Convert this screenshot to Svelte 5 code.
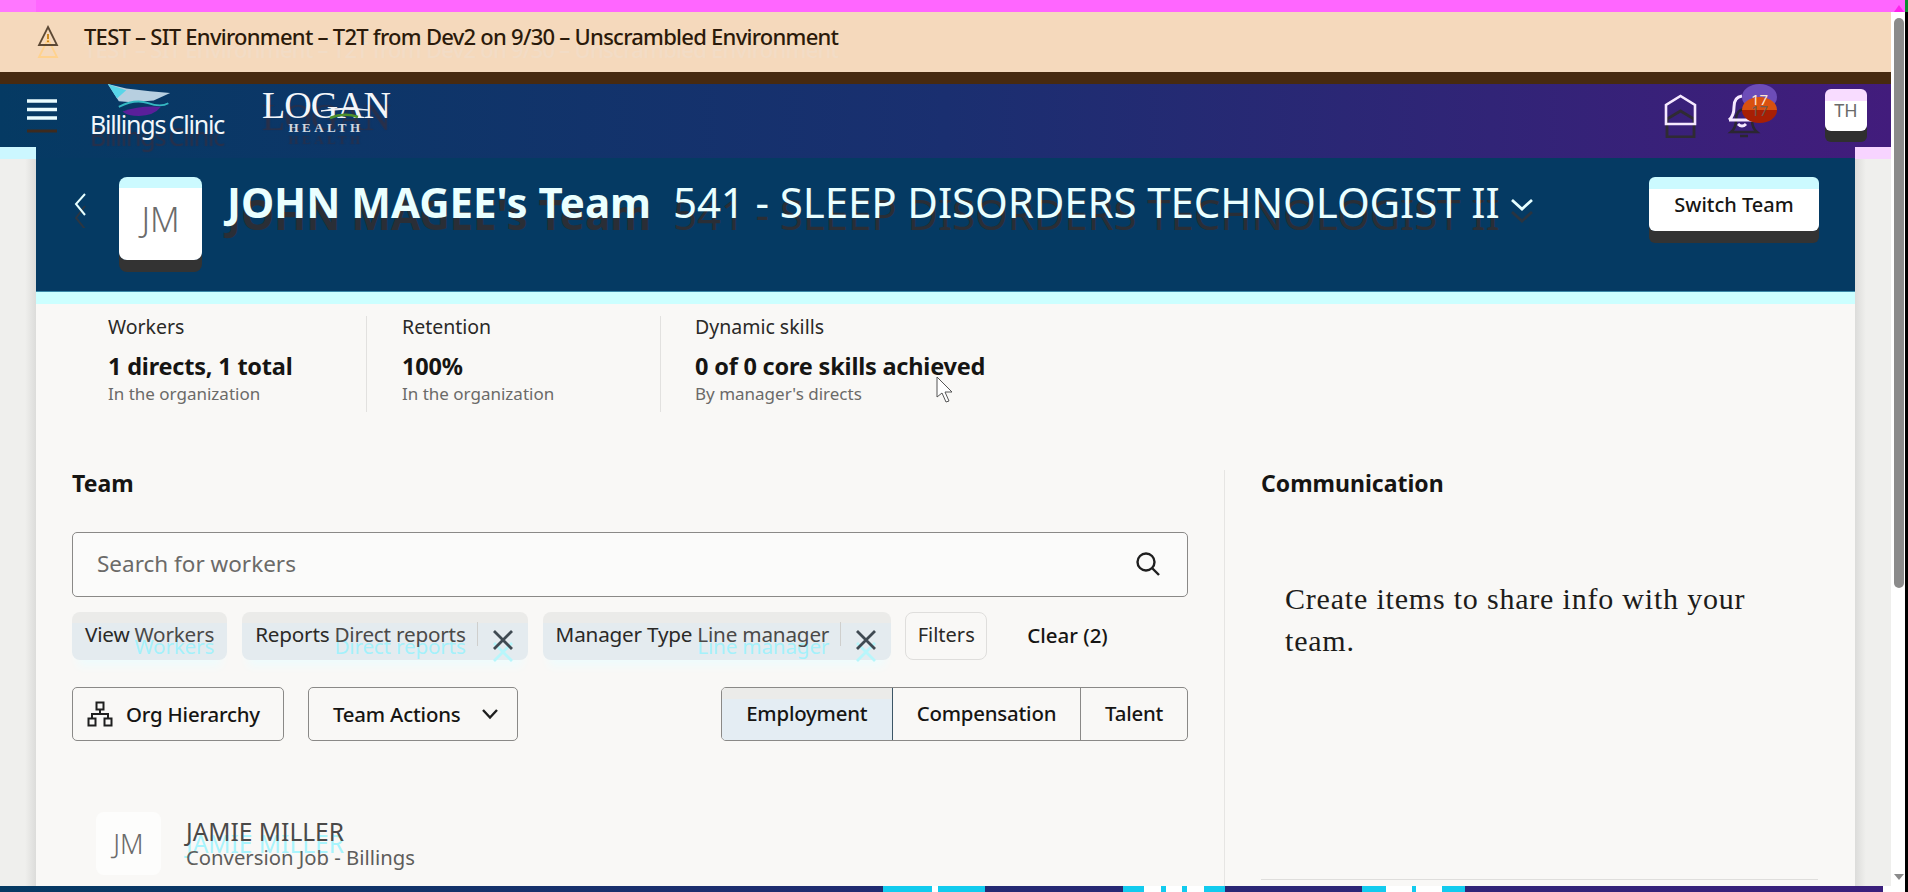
<script>
	const stats = [
		{ label: "Workers", value: "1 directs, 1 total", note: "In the organization" },
		{ label: "Retention", value: "100%", note: "In the organization" },
		{ label: "Dynamic skills", value: "0 of 0 core skills achieved", note: "By manager's directs" },
	];
	const chips = [
		{ name: "View", value: "Workers", close: false },
		{ name: "Reports", value: "Direct reports", close: true },
		{ name: "Manager Type", value: "Line manager", close: true },
	];
	const tabs = ["Employment", "Compensation", "Talent"];
	// cyan and white blocks in the bottom strip
	const glitches = [
		{ x: 883, w: 49, c: "#12cbee" },
		{ x: 932, w: 6, c: "#fff" },
		{ x: 938, w: 47, c: "#12cbee" },
		{ x: 1123, w: 21, c: "#12cbee" },
		{ x: 1144, w: 17, c: "#fff" },
		{ x: 1161, w: 5, c: "#12cbee" },
		{ x: 1166, w: 16, c: "#fff" },
		{ x: 1182, w: 5, c: "#12cbee" },
		{ x: 1187, w: 17, c: "#fff" },
		{ x: 1204, w: 21, c: "#12cbee" },
		{ x: 1362, w: 24, c: "#12cbee" },
		{ x: 1386, w: 26, c: "#fff" },
		{ x: 1412, w: 4, c: "#12cbee" },
		{ x: 1416, w: 26, c: "#fff" },
		{ x: 1442, w: 23, c: "#12cbee" },
		{ x: 1883, w: 8, c: "#fff" },
	];
</script>

<div class="page">
	<div class="main">
		<div class="magenta"></div>
		<div class="banner">
			<svg class="warn" width="22" height="36" viewBox="0 0 22 36">
				<path d="M11 14 L20 32 H2 Z" fill="none" stroke="#ffd28e" stroke-width="1.800" />
				<path d="M11 2 L20 20 H2 Z" fill="none" stroke="#5c4834" stroke-width="1.800" />
				<path d="M11 9v5M11 15.500v1.800" stroke="#c9800f" stroke-width="1.800" />
			</svg>
			<span>TEST – SIT Environment – T2T from Dev2 on 9/30 – Unscrambled Environment</span>
		</div>
		<div class="brown"></div>

		<header class="topbar">
			<svg class="burger" width="32" height="36" viewBox="0 0 32 36">
				<path d="M1 2h30M1 10.500h30M1 19h30" stroke="#e9fdff" stroke-width="3.600" />
				<path d="M1 32h30" stroke="#3d2a1e" stroke-width="3" />
			</svg>
			<div class="billings">
				<svg width="72" height="33" viewBox="0 0 72 36">
					<path d="M2 1 L22 6 L48 9 L70 11 L52 19 L28 21 L14 20 Z" fill="#b7cfe0" />
					<path d="M2 1 L12 17 L22 8 Z" fill="#58d5e8" />
					<path d="M14 26 Q32 17 46 22 T68 22" fill="none" stroke="#35b8c2" stroke-width="2" />
					<path d="M18 31 Q38 24 60 26 Q52 36 36 36 Q24 36 18 31Z" fill="#5a1f9a" />
				</svg>
				<span>Billings Clinic</span>
			</div>
			<div class="logan">
				<span class="logan-name">LOGAN</span>
				<svg class="logan-swoosh" width="50" height="16" viewBox="0 0 50 16">
					<path d="M1 6 Q24 1 48 5 Q24 3 1 6Z" fill="#f3f6fa" stroke="#f3f6fa" />
					<path d="M10 13 Q24 7 38 12" fill="none" stroke="#4d8f2a" stroke-width="2.500" />
				</svg>
				<span class="logan-sub">HEALTH</span>
			</div>
			<div class="spacer"></div>
			<svg class="home" width="33" height="44" viewBox="0 0 33 44">
				<path d="M3 43V25L16.500 17L30 25V43Z" fill="none" stroke="#2f2b33" stroke-width="2.800" />
				<path d="M2 30V11L16.500 2L31 11V30Z" fill="none" stroke="#f6e9ff" stroke-width="2.600" />
			</svg>
			<div class="bell-wrap">
				<svg width="34" height="46" viewBox="0 0 34 46">
					<path d="M4 38 Q9 34 9 26 Q9 16 17 15 Q25 16 25 26 Q25 34 30 38Z M13 42h8" fill="none" stroke="#2b2632" stroke-width="2.500" />
					<path d="M2 26 Q7 22 7 13 Q7 3 15 2 M2 26H28 M11 30 q4 4 8 0" fill="none" stroke="#f6e9ff" stroke-width="3" />
				</svg>
				<i class="bubble purple"></i>
				<i class="bubble red"></i>
				<span class="count">17</span>
			</div>
			<div class="tile-th">TH</div>
		</header>

		<div class="workspace">
			<div class="gutter left"></div>
			<div class="panel">
				<div class="strip"></div>
				<div class="team-band">
					<svg class="back" width="14" height="36" viewBox="0 0 14 36">
						<path d="M12 14 L3 26 L12 37" fill="none" stroke="#2b3642" stroke-width="2" />
						<path d="M12 2 L3 12 L12 23" fill="none" stroke="#e6ffff" stroke-width="2" />
					</svg>
					<div class="tile-jm">JM</div>
					<h1>JOHN MAGEE's Team</h1>
					<span class="job">541 - SLEEP DISORDERS TECHNOLOGIST II</span>
					<svg class="job-chev" width="24" height="26" viewBox="0 0 24 26">
						<path d="M2 14 L12 23 L22 14" fill="none" stroke="#2a3440" stroke-width="2.800" />
						<path d="M2 2 L12 11 L22 2" fill="none" stroke="#e6ffff" stroke-width="2.800" />
					</svg>
					<div class="spacer"></div>
					<button class="switch">Switch Team</button>
				</div>
				<div class="cyan-line"></div>

				<div class="content">
					<section class="stats">
						{#each stats as s}
							<div class="stat">
								<div class="stat-label">{s.label}</div>
								<div class="stat-value">{s.value}</div>
								<div class="stat-note">{s.note}</div>
							</div>
						{/each}
						<svg class="cursor" width="18" height="28" viewBox="0 0 18 28">
							<path d="M1 1 V21 L6 17 L10 26 L13 25 L9 16 L16 16 Z" fill="#fff" stroke="#555" stroke-width="1" />
						</svg>
					</section>

					<div class="columns">
						<section class="team">
							<h2>Team</h2>
							<div class="search">
								<span>Search for workers</span>
								<svg width="26" height="26" viewBox="0 0 26 26">
									<circle cx="11" cy="11" r="8.500" fill="none" stroke="#1f1f1f" stroke-width="2.400" />
									<path d="M17.500 17.500 L24 24" stroke="#1f1f1f" stroke-width="2.400" />
								</svg>
							</div>
							<div class="chips">
								{#each chips as chip}
									<div class="chip">
										<span class="chip-name">{chip.name}</span>
										<span class="chip-value">{chip.value}</span>
										{#if chip.close}
											<i class="chip-sep"></i>
											<svg class="chip-x" width="24" height="40" viewBox="0 0 24 40">
												<path d="M3 15 L21 33 M21 15 L3 33" stroke="#b8f6fb" stroke-width="2.800" />
												<path d="M3 3 L21 21 M21 3 L3 21" stroke="#3f4a52" stroke-width="2.800" />
											</svg>
										{/if}
									</div>
								{/each}
								<button class="filters">Filters</button>
								<span class="clear">Clear (2)</span>
							</div>
							<div class="actions">
								<button class="btn org">
									<svg width="26" height="26" viewBox="0 0 26 26">
										<path d="M9.500 1.500h7v7h-7zM1.500 17.500h7v7h-7zM17.500 17.500h7v7h-7z M13 8.500v4.500M5 17.500V13H21V17.500" fill="none" stroke="#1f1f1f" stroke-width="2" />
									</svg>
									Org Hierarchy
								</button>
								<button class="btn drop">
									Team Actions
									<svg width="18" height="12" viewBox="0 0 18 12">
										<path d="M2 2 L9 9.500 L16 2" fill="none" stroke="#1f1f1f" stroke-width="2.400" />
									</svg>
								</button>
								<div class="spacer"></div>
								<div class="tabs">
									{#each tabs as tab, i}
										<div class="tab" class:active={i === 0}>{tab}</div>
									{/each}
								</div>
							</div>
							<div class="person">
								<div class="tile-person">JM</div>
								<div class="person-text">
									<div class="person-name">JAMIE MILLER</div>
									<div class="person-job">Conversion Job - Billings</div>
								</div>
							</div>
						</section>
						<aside class="comms">
							<h2>Communication</h2>
							<p>Create items to share info with your team.</p>
							<div class="comms-rule"></div>
						</aside>
					</div>
				</div>
			</div>
			<div class="gutter right"></div>
		</div>

		<div class="footer">
			{#each glitches as g}
				<i style="left:{g.x}px;width:{g.w}px;background:{g.c}"></i>
			{/each}
		</div>
	</div>

	<div class="scrollbar">
		<span class="arrow up"></span>
		<span class="thumb"></span>
		<span class="arrow down"></span>
	</div>
</div>

<style>
	:global(body) {
		margin: 0;
		overflow: hidden;
	}

	.page {
		--sans: "Noto Sans", "Open Sans", sans-serif;
		--band: linear-gradient(90deg, #053a63 0%, #1a2f70 50%, #421c7c 100%);
		display: flex;
		font-family: var(--sans);
		height: 892px;
		overflow: hidden;
		width: 1908px;
	}

	.main {
		display: flex;
		flex-direction: column;
		position: relative;
		width: 1891px;
	}

	.spacer {
		flex: 1;
	}

	.magenta {
		background: linear-gradient(90deg, #ff77ff 36px, #ff66ff 36px);
		flex: 0 0 12px;
	}

	.banner {
		align-items: flex-start;
		background: #f5d9bc;
		box-sizing: border-box;
		color: #2b1a0a;
		display: flex;
		flex: 0 0 60px;
		font-size: 22px;
		font-weight: 500;
		gap: 25px;
		letter-spacing: -0.74px;
		line-height: 30px;
		padding: 9px 0 0 37px;
		text-shadow: 0 13px 0 #f2dcc6;
		white-space: nowrap;
	}

	.warn {
		margin-top: 4px;
	}

	.brown {
		background: #472a10;
		flex: 0 0 12px;
	}

	.topbar {
		align-items: flex-start;
		background: var(--band);
		display: flex;
		flex: 0 0 63px;
		position: relative;
	}

	.burger {
		margin: 15px 0 0 26px;
	}

	.billings {
		display: flex;
		flex-direction: column;
		margin: -1px 0 0 32px;
		width: 136px;
	}

	.billings svg {
		margin-left: 13px;
	}

	.billings span {
		color: #f1f7fb;
		font-size: 25px;
		letter-spacing: -1.200px;
		line-height: 24px;
		margin-top: -4px;
		text-shadow: 0 12px 1px #29304a;
		white-space: nowrap;
		word-spacing: -2px;
	}

	.logan {
		align-items: center;
		color: #f3f6fa;
		display: flex;
		flex-direction: column;
		font-family: "Liberation Serif", serif;
		margin: 7px 0 0 36px;
		position: relative;
		text-shadow: 0 12px 1px #29304a;
	}

	.logan-name {
		font-size: 38px;
		letter-spacing: -1px;
		line-height: 28px;
	}

	.logan-swoosh {
		left: 58px;
		position: absolute;
		top: 14px;
	}

	.logan-sub {
		font-size: 13px;
		font-weight: bold;
		letter-spacing: 3.400px;
		line-height: 16px;
		margin-top: 1px;
		opacity: 0.85;
	}

	.home {
		margin: 10px 30px 0 0;
	}

	.bell-wrap {
		height: 50px;
		margin: 10px 0 0;
		position: relative;
		width: 98px;
	}

	.bubble {
		border-radius: 50%;
		height: 26px;
		left: 15px;
		position: absolute;
		width: 35px;
	}

	.bubble.purple {
		background: #6d4db8;
		top: -10px;
	}

	.bubble.red {
		background: linear-gradient(#d9500f 0 13px, #a71f04 13px);
		top: 3px;
	}

	.count {
		color: #ffe6cf;
		font-size: 15px;
		left: 15px;
		line-height: 20px;
		position: absolute;
		text-align: center;
		text-shadow: 0 11px 0 #6e5a50;
		top: -5px;
		width: 35px;
	}

	.tile-th {
		align-items: center;
		background: linear-gradient(#f8dcff 0 12px, #fff 12px);
		border-radius: 6px;
		box-shadow: 0 11px 0 #2f2f2f;
		color: #6a6a6a;
		display: flex;
		font-size: 18px;
		height: 42px;
		justify-content: center;
		margin: 5px 24px 0 0;
		width: 42px;
	}

	.workspace {
		display: grid;
		flex: 1;
		grid-template-columns: 36px 1fr 36px;
		min-height: 0;
	}

	.gutter {
		background: #ececea;
	}

	.gutter.left {
		background:
			linear-gradient(#ccf7ff, #ccf7ff) top / 100% 12px no-repeat,
			linear-gradient(90deg, #efefed 70%, #dcdcda);
	}

	.gutter.right {
		background:
			linear-gradient(#f7d4ff, #f7d4ff) top / 100% 12px no-repeat,
			linear-gradient(90deg, #dcdcda, #efefed 30%);
	}

	.panel {
		display: flex;
		flex-direction: column;
		min-height: 0;
		min-width: 0;
	}

	.strip {
		background: linear-gradient(90deg, #053a63 0%, #1a2f70 50%, #421c7c 100%) -36px 0 / 1891px 100%;
		flex: 0 0 11px;
	}

	.team-band {
		align-items: flex-start;
		background: #053a63;
		display: flex;
		flex: 0 0 133px;
		padding-left: 37px;
	}

	.back {
		margin-top: 34px;
	}

	.tile-jm {
		align-items: center;
		background: linear-gradient(#ccfaff 0 11px, #fff 11px);
		border-radius: 8px;
		box-shadow: 0 12px 0 #333;
		color: #6b6b6b;
		display: flex;
		font-size: 34px;
		font-weight: 300;
		height: 83px;
		justify-content: center;
		margin: 19px 25px 0 32px;
		width: 83px;
	}

	h1 {
		color: #eaffff;
		font-size: 42px;
		font-weight: 700;
		line-height: 50px;
		margin: 19px 22px 0 0;
		text-shadow: 0 12px 0 #2a2e36;
		white-space: nowrap;
	}

	.job {
		color: #eaffff;
		font-size: 42px;
		letter-spacing: -0.1px;
		line-height: 50px;
		margin-top: 19px;
		text-shadow: 0 12px 0 #2a2e36;
		white-space: nowrap;
	}

	.job-chev {
		margin: 40px 0 0 10px;
	}

	.switch {
		background: linear-gradient(#ccfaff 0 12px, #fff 12px);
		border: 0;
		border-radius: 6px;
		box-shadow: 0 12px 0 #333;
		color: #161513;
		font-family: var(--sans);
		font-size: 20px;
		font-weight: 500;
		height: 54px;
		margin: 19px 36px 0 0;
		width: 170px;
	}

	.cyan-line {
		background: #ccffff;
		border-top: 1px solid #3a89a8;
		flex: 0 0 12px;
	}

	.content {
		background: #f9f8f6;
		color: #161513;
		display: flex;
		flex: 1;
		flex-direction: column;
		min-height: 0;
	}

	.stats {
		display: flex;
		padding-top: 12px;
		position: relative;
	}

	.stat {
		border-left: 1px solid #e2e1df;
		height: 96px;
		padding-left: 35px;
		width: 258px;
	}

	.stat:first-child {
		border-left: 0;
		padding-left: 72px;
	}

	.stat:last-of-type {
		padding-left: 34px;
	}

	.stat-label {
		color: #2a2927;
		font-size: 19.500px;
		line-height: 22px;
	}

	.stat-value {
		font-size: 23.500px;
		font-weight: 700;
		letter-spacing: -0.2px;
		line-height: 28px;
		margin-top: 14px;
		white-space: nowrap;
	}

	.stat-note {
		color: #6b6a68;
		font-size: 17px;
		line-height: 22px;
		margin-top: 3px;
		white-space: nowrap;
	}

	.cursor {
		left: 900px;
		position: absolute;
		top: 72px;
	}

	.columns {
		display: flex;
		flex: 1;
		margin-top: 58px;
		min-height: 0;
	}

	h2 {
		font-size: 23px;
		font-weight: 700;
		line-height: 26px;
		margin: 0;
	}

	.team {
		box-sizing: border-box;
		flex: 0 0 1188px;
		padding: 0 36px;
	}

	.search {
		align-items: center;
		background: #fbfbfa;
		border: 1px solid #8a8987;
		border-radius: 5px;
		box-sizing: border-box;
		color: #6b6a68;
		display: flex;
		font-size: 22.500px;
		height: 65px;
		justify-content: space-between;
		margin-top: 36px;
		padding: 0 26px 2px 24px;
	}

	.chips {
		align-items: center;
		display: flex;
		gap: 15px;
		margin-top: 15px;
	}

	.chip {
		align-items: center;
		background: linear-gradient(#ebebe9 0 11px, #e4ebef 11px);
		border-radius: 8px;
		box-shadow: 0 12px 10px -6px #effcfd;
		box-sizing: border-box;
		display: flex;
		font-size: 20.700px;
		gap: 5px;
		height: 48px;
		letter-spacing: -0.2px;
		padding: 0 13px 5px;
		white-space: nowrap;
	}

	.chip-name {
		color: #2a2927;
	}

	.chip-value {
		color: #4a4948;
		text-shadow: 0 12px 0 #a4f1fb;
	}

	.chip-sep {
		background: #cfcfcd;
		height: 24px;
		margin-left: 6px;
		width: 1px;
	}

	.chip-x {
		margin: 17px 0 -12px 8px;
		overflow: visible;
	}

	.filters {
		background: #f9f8f6;
		border: 1px solid #dfdedc;
		border-radius: 8px;
		color: #2a2927;
		font-family: var(--sans);
		font-size: 20px;
		height: 48px;
		margin-left: -1px;
		padding: 0 0 3px;
		width: 82px;
	}

	.clear {
		font-size: 20.500px;
		font-weight: 500;
		margin-bottom: 2px;
		margin-left: 25px;
		white-space: nowrap;
	}

	.actions {
		align-items: stretch;
		display: flex;
		gap: 24px;
		height: 54px;
		margin-top: 27px;
	}

	.btn {
		align-items: center;
		background: #f9f8f6;
		border: 1px solid #8a8987;
		border-radius: 5px;
		color: #161513;
		display: flex;
		font-family: var(--sans);
		font-size: 20.400px;
		font-weight: 500;
		letter-spacing: -0.2px;
		padding-bottom: 2px;
	}

	.org {
		gap: 13px;
		padding-left: 14px;
		padding-right: 0;
		width: 212px;
	}

	.drop {
		gap: 21px;
		padding-left: 24px;
		padding-right: 0;
		width: 210px;
	}

	.tabs {
		border: 1px solid #8a8987;
		border-radius: 5px;
		box-sizing: border-box;
		display: flex;
		font-size: 20.400px;
		font-weight: 500;
		letter-spacing: -0.2px;
		overflow: hidden;
		width: 467px;
	}

	.tab {
		align-items: center;
		border-left: 1px solid #8a8987;
		box-sizing: border-box;
		display: flex;
		justify-content: center;
		padding-bottom: 2px;
		width: 107px;
	}

	.tab:first-child {
		border-left: 0;
		width: 171px;
	}

	.tab:nth-child(2) {
		width: 188px;
	}

	.tab.active {
		background: linear-gradient(#ebebe9 0 11px, #e4edf3 11px);
		border-right: 1px solid #3d5666;
	}

	.tab.active + .tab {
		border-left: 0;
	}

	.person {
		align-items: center;
		display: flex;
		gap: 25px;
		margin: 71px 0 0 24px;
	}

	.tile-person {
		align-items: center;
		background: #fdfdfc;
		border-radius: 8px;
		color: #6b6b6b;
		display: flex;
		font-size: 27px;
		font-weight: 300;
		height: 63px;
		justify-content: center;
		width: 65px;
	}

	.person-name {
		color: #4a4948;
		font-size: 24.500px;
		line-height: 27px;
		text-shadow: 0 12px 0 #a8f4fd;
	}

	.person-job {
		color: #5e5d5b;
		font-size: 20.300px;
		line-height: 25px;
		position: relative;
	}

	.comms {
		border-left: 1px solid #e6e5e3;
		box-sizing: border-box;
		flex: 1;
		padding: 0 37px 0 36px;
		position: relative;
	}

	.comms p {
		color: #1d1c1a;
		font-family: "Liberation Serif", serif;
		font-size: 30px;
		letter-spacing: 0.8px;
		line-height: 42px;
		margin: 82px 0 0 24px;
	}

	.comms-rule {
		background: #dfdedc;
		bottom: 6px;
		height: 1px;
		left: 36px;
		position: absolute;
		right: 37px;
	}

	.footer {
		background: linear-gradient(90deg, #053a63 0%, #232a72 50%, #3a1f7c 100%);
		flex: 0 0 6px;
		position: relative;
	}

	.footer i {
		height: 100%;
		position: absolute;
		top: 0;
	}

	.scrollbar {
		background: linear-gradient(#ff66ff 0 12px, #fff 12px);
		flex: 0 0 17px;
		position: relative;
	}

	.scrollbar::after {
		background: linear-gradient(#0a8c2e 0 12px, #000 12px);
		bottom: 0;
		content: "";
		position: absolute;
		right: 0;
		top: 0;
		width: 3px;
	}

	.thumb {
		background: #8b8b8b;
		border-radius: 5px;
		height: 570px;
		left: 3px;
		position: absolute;
		top: 18px;
		width: 10px;
	}

	.arrow {
		border-left: 5px solid transparent;
		border-right: 5px solid transparent;
		height: 0;
		left: 3px;
		position: absolute;
		width: 0;
	}

	.arrow.up {
		border-bottom: 7px solid #ff22ee;
		top: 5px;
	}

	.arrow.down {
		border-top: 6px solid #8b8b8b;
		top: 874px;
	}
</style>
